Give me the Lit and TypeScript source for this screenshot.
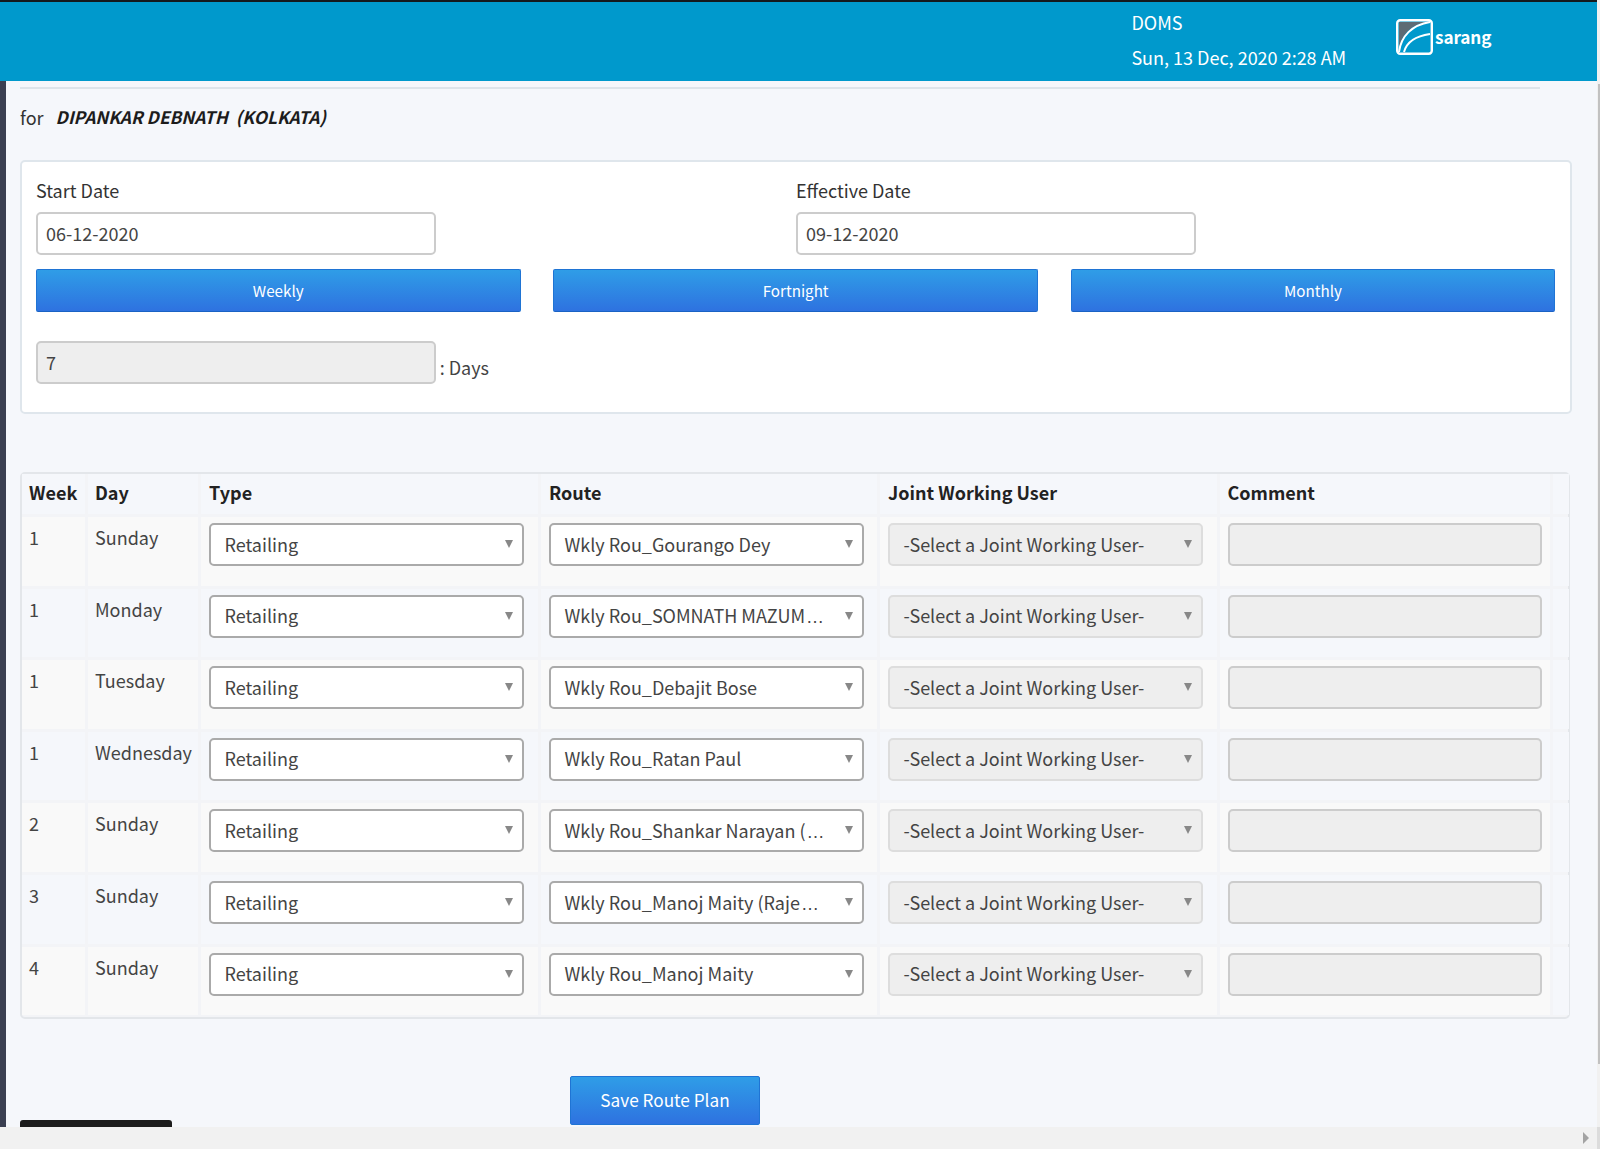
import { LitElement, html, css } from "lit";
import { customElement } from "lit/decorators.js";

const rows: [string, string, string, boolean][] = [
  ["1", "Sunday", "Wkly Rou_Gourango Dey", false],
  ["1", "Monday", "Wkly Rou_SOMNATH MAZUM", true],
  ["1", "Tuesday", "Wkly Rou_Debajit Bose", false],
  ["1", "Wednesday", "Wkly Rou_Ratan Paul", false],
  ["2", "Sunday", "Wkly Rou_Shankar Narayan (", true],
  ["3", "Sunday", "Wkly Rou_Manoj Maity (Raje", true],
  ["4", "Sunday", "Wkly Rou_Manoj Maity", false],
];

@customElement("app-root")
export class AppRoot extends LitElement {
  static styles = css`
    :host {
      display: block;
      width: 1600px;
      height: 1149px;
      overflow: hidden;
      font-family: "Noto Sans CJK SC", "Noto Sans", sans-serif;
      font-size: 18px;
      line-height: 26px;
      color: #333;
      background: #f5f7fb;
    }
    * { box-sizing: border-box; }
    .window { display: grid; grid-template-columns: 1597px 3px; grid-template-rows: 1127px 22px; height: 1149px; }
    .page { display: flex; flex-direction: column; overflow: hidden; min-width: 0; }
    .vtrack { background: #f1f1f1; padding-top: 84px; }
    .vthumb { height: 980px; background: #c1c1c1; margin-left: 1px; }
    .htrack { background: #f1f1f1; display: flex; justify-content: flex-end; align-items: center; padding-right: 8px; }
    .harrow { width: 0; height: 0; border-left: 6px solid #a3a3a3; border-top: 6px solid transparent; border-bottom: 6px solid transparent; }
    .corner { background: #dcdcdc; }
    header {
      flex: none;
      height: 81px;
      background: #0099cc;
      border-top: 2px solid #14191c;
      color: #fff;
      display: flex;
      padding-left: 1131.4px;
    }
    .who { width: 264.6px; display: flex; flex-direction: column; padding-top: 7px; gap: 10px; }
    .who div { height: 26px; }
    .who div + div { margin-top: -1px; }
    .logo { display: flex; align-items: flex-start; padding-top: 17px; gap: 2px; }
    .logo svg { display: block; }
    .logo span { font-weight: 700; font-size: 17.2px; line-height: 24px; margin-top: 6px; letter-spacing: -0.1px; }
    .body { flex: 1; display: flex; min-height: 0; }
    .bar { flex: none; width: 6px; background: #3a3f51; }
    .content { flex: 1; padding-left: 14px; min-width: 0; }
    .rule { height: 2px; width: 1520px; margin-top: 6px; background: #dde4ea; }
    .for { margin-top: 15px; display: flex; gap: 12px; color: #333; height: 26px; }
    .for b { font-style: italic; font-weight: 700; font-size: 17.3px; color: #1c1c1c; white-space: pre; }
    .card {
      margin-top: 30px;
      width: 1552px;
      height: 254px;
      background: #fff;
      border: 2px solid #dfe6ec;
      border-radius: 5px;
      padding: 15px 14px 0;
    }
    .dates { display: grid; grid-template-columns: 760px 1fr; }
    label { display: block; height: 26px; margin-bottom: 9px; }
    .input {
      width: 399.7px;
      height: 43px;
      border: 2px solid #ccc;
      border-radius: 5px;
      background: #fff;
      padding: 6px 8px;
      line-height: 26px;
      color: #444;
    }
    .input.off { background: #eee; }
    .btns { display: grid; grid-template-columns: repeat(3, 484.5px); column-gap: 32.9px; margin-top: 14px; }
    .btn {
      height: 43px;
      display: flex;
      align-items: center;
      justify-content: center;
      padding-bottom: 2px;
      color: #fff;
      font-size: 15.2px;
      background: linear-gradient(#2f9de7, #2e72e0);
      border: 1px solid #1f74d4;
      border-bottom-color: #1a62c4;
      border-radius: 2px;
    }
    .days { display: flex; align-items: flex-end; gap: 4px; margin-top: 29px; }
    .days span { line-height: 26px; margin-bottom: 4px; color: #444; }
    .table {
      margin-top: 58px;
      width: 1550px;
      border: 2px solid #e3e6ea;
      border-radius: 5px;
      display: grid;
      grid-template-columns: 63px 110px 337px 336px 336.5px 330.5px 1fr;
      grid-template-rows: 40px;
      grid-auto-rows: 68.62px;
      gap: 3px;
      padding-bottom: 1.4px;
      background: #f3f4f7;
    }
    .th { background: #f5f7fb; font-weight: 700; color: #222; padding: 5px 8px; }
    .td { background: #f9f9f9; padding: 7px 8px; color: #444; }
    .td.even { background: #f5f7fb; }
    .td.blank { background: #f5f7fb; padding: 0; }
    .td.ctl { padding: 6px 8px; display: flex; align-items: flex-start; }
    .inset { padding-left: 7px; }
    .select {
      width: 315px;
      height: 43px;
      border: 2px solid #aaa;
      border-radius: 5px;
      background: #fff;
      padding: 5.6px 30px 0 13.5px;
      color: #444;
      position: relative;
    }
    .select.off { background: #eee; border-color: #ddd; }
    .text { display: block; white-space: nowrap; line-height: 26px; }
    .ell { font-family: "Liberation Sans", sans-serif; margin-left: 1px; }
    .arrow {
      position: absolute;
      right: 9px;
      top: 15px;
      width: 0;
      height: 0;
      border-top: 8px solid #888;
      border-left: 4.5px solid transparent;
      border-right: 4.5px solid transparent;
    }
    .comment { width: 316px; height: 43px; border: 2px solid #ccc; border-radius: 5px; background: #eee; }
    .foot { position: relative; height: 109px; }
    .save {
      position: absolute;
      left: 550px;
      top: 57px;
      width: 190px;
      height: 49px;
      display: flex;
      align-items: center;
      justify-content: center;
      font-size: 17.2px;
      color: #fff;
      background: linear-gradient(#2f9de7, #2e72e0);
      border: 1px solid #1f74d4;
      border-radius: 2px;
    }
    .dark {
      position: absolute;
      left: 0;
      top: 101px;
      width: 152px;
      height: 20px;
      background: #1c1c1c;
      border-radius: 3px 3px 0 0;
    }
  `;

  private select(text: string, off = false, cut = false) {
    return html`<div class="select ${off ? "off" : ""}"><span class="text">${text}${cut ? html`<span class="ell">…</span>` : ""}</span><i class="arrow"></i></div>`;
  }

  render() {
    return html`
      <div class="window">
        <div class="page">
          <header>
            <div class="who"><div>DOMS</div><div>Sun, 13 Dec, 2020 2:28 AM</div></div>
            <div class="logo">
              <svg width="37" height="36" viewBox="0 0 37 36" fill="none">
                <path d="M3 3 H31 C18 5 6 13 3 30 Z" fill="#5d6b74" />
                <rect x="1.2" y="1.2" width="34.6" height="33.6" rx="3" stroke="#fff" stroke-width="2.4" />
                <path d="M3 33 C5 17 16 6 34 3" stroke="#fff" stroke-width="2" />
                <path d="M8 33 C11 22 20 17 34 15" stroke="#fff" stroke-width="2" />
              </svg>
              <span>sarang</span>
            </div>
          </header>
          <div class="body">
            <div class="bar"></div>
            <div class="content">
              <div class="rule"></div>
              <div class="for"><span>for</span><b>DIPANKAR DEBNATH  (KOLKATA)</b></div>
              <section class="card">
                <div class="dates">
                  <div><label>Start Date</label><div class="input">06-12-2020</div></div>
                  <div><label>Effective Date</label><div class="input">09-12-2020</div></div>
                </div>
                <div class="btns">
                  <div class="btn">Weekly</div>
                  <div class="btn">Fortnight</div>
                  <div class="btn">Monthly</div>
                </div>
                <div class="days"><div class="input off">7</div><span>: Days</span></div>
              </section>
              <section class="table">
                ${["Week", "Day", "Type", "Route", "Joint Working User", "Comment", ""].map(
                  (h, i) => html`<div class="th ${i < 2 ? "inset" : ""}">${h}</div>`
                )}
                ${rows.map((r, i) => {
                  const c = i % 2 ? "even" : "";
                  return html`
                    <div class="td inset ${c}">${r[0]}</div>
                    <div class="td inset ${c}">${r[1]}</div>
                    <div class="td ctl ${c}">${this.select("Retailing")}</div>
                    <div class="td ctl ${c}">${this.select(r[2], false, r[3])}</div>
                    <div class="td ctl ${c}">${this.select("-Select a Joint Working User-", true)}</div>
                    <div class="td ctl ${c}"><div class="comment"></div></div>
                    <div class="td blank"></div>
                  `;
                })}
              </section>
              <div class="foot">
                <div class="save">Save Route Plan</div>
                <div class="dark"></div>
              </div>
            </div>
          </div>
        </div>
        <div class="vtrack"><div class="vthumb"></div></div>
        <div class="htrack"><i class="harrow"></i></div>
        <div class="corner"></div>
      </div>
    `;
  }
}
